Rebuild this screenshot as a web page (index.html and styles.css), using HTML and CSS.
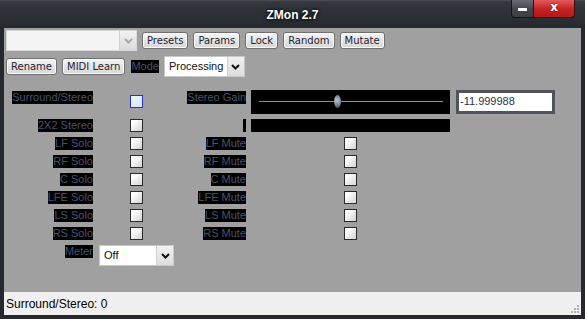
FILE: index.html
```html
<!DOCTYPE html>
<html lang="en">
<head>
  <meta charset="UTF-8">
  <title>ZMon 2.7</title>
  <link rel="stylesheet" href="styles.css">
</head>
<body>

<div class="window">
  <!-- Title bar -->
  <div class="titlebar">
    <div></div>
    <div class="title">ZMon 2.7</div>
    <div class="controls">
      <div class="btn-min"><span></span></div>
      <div class="btn-close">x</div>
    </div>
  </div>

  <div class="content">
    <!-- Preset toolbar -->
    <div class="toolbar">
      <div class="combo combo-presets">
        <span class="combo-text"></span>
        <span class="combo-arrow disabled"><svg width="9" height="6" viewBox="0 0 9 6"><path d="M1 1 L4.5 4.5 L8 1" fill="none" stroke="#a8a8a8" stroke-width="2"/></svg></span>
      </div>
      <button class="btn">Presets</button>
      <button class="btn">Params</button>
      <button class="btn">Lock</button>
      <button class="btn">Random</button>
      <button class="btn">Mutate</button>
    </div>

    <div class="toolbar">
      <button class="btn">Rename</button>
      <button class="btn">MIDI Learn</button>
      <span class="label mode-label">Mode</span>
      <div class="combo combo-mode">
        <span class="combo-text">Processing</span>
        <span class="combo-arrow"><svg width="9" height="6" viewBox="0 0 9 6"><path d="M1 1 L4.5 4.5 L8 1" fill="none" stroke="#111" stroke-width="2"/></svg></span>
      </div>
    </div>

    <!-- Parameters -->
    <div class="params">
      <span class="label row-top">Surround/Stereo</span>
      <span class="check focused col-cb1 row-top-cb"></span>
      <span class="label col-lb2 row-top">Stereo Gain</span>
      <div class="slider">
        <div class="groove"><span class="thumb"></span></div>
      </div>
      <div class="value-box">-11.999988</div>

      <span class="label">2X2 Stereo</span>
      <span class="check col-cb1"></span>
      <span class="label col-lb2 empty"></span>
      <div class="meter-bar"></div>

      <span class="label">LF Solo</span>
      <span class="check col-cb1"></span>
      <span class="label col-lb2">LF Mute</span>
      <span class="check col-cb2"></span>

      <span class="label">RF Solo</span>
      <span class="check col-cb1"></span>
      <span class="label col-lb2">RF Mute</span>
      <span class="check col-cb2"></span>

      <span class="label">C Solo</span>
      <span class="check col-cb1"></span>
      <span class="label col-lb2">C Mute</span>
      <span class="check col-cb2"></span>

      <span class="label">LFE Solo</span>
      <span class="check col-cb1"></span>
      <span class="label col-lb2">LFE Mute</span>
      <span class="check col-cb2"></span>

      <span class="label">LS Solo</span>
      <span class="check col-cb1"></span>
      <span class="label col-lb2">LS Mute</span>
      <span class="check col-cb2"></span>

      <span class="label">RS Solo</span>
      <span class="check col-cb1"></span>
      <span class="label col-lb2">RS Mute</span>
      <span class="check col-cb2"></span>

      <span class="label">Meter</span>
      <div class="combo combo-meter">
        <span class="combo-text">Off</span>
        <span class="combo-arrow"><svg width="9" height="6" viewBox="0 0 9 6"><path d="M1 1 L4.5 4.5 L8 1" fill="none" stroke="#111" stroke-width="2"/></svg></span>
      </div>
    </div>
  </div>

  <!-- Status bar -->
  <div class="statusbar">
    <span>Surround/Stereo: 0</span>
    <svg class="grip" width="9" height="9" viewBox="0 0 9 9">
      <rect x="7" y="1" width="2" height="2" fill="#b0b0b0"/>
      <rect x="4" y="4" width="2" height="2" fill="#b0b0b0"/>
      <rect x="7" y="4" width="2" height="2" fill="#b0b0b0"/>
      <rect x="1" y="7" width="2" height="2" fill="#b0b0b0"/>
      <rect x="4" y="7" width="2" height="2" fill="#b0b0b0"/>
      <rect x="7" y="7" width="2" height="2" fill="#b0b0b0"/>
    </svg>
  </div>
</div>

</body>
</html>
```

FILE: styles.css
```css
body {
  margin: 0;
  font-family: 'Liberation Sans', Arial, sans-serif;
  background-color: #ffffff;
}

.window {
  width: 585px;
  height: 319px;
  display: flex;
  flex-direction: column;
  background-color: #25282d;
  box-sizing: border-box;
  padding-bottom: 4px;
}

/* Title bar */
.titlebar {
  height: 28px;
  flex-shrink: 0;
  display: grid;
  grid-template-columns: 1fr auto 1fr;
  background: linear-gradient(#4c5057 0, #34373c 2px, #2b2e33 60%, #26292e 100%);
}

.title {
  align-self: center;
  color: #ffffff;
  font-weight: bold;
  font-size: 12px;
  text-shadow: 0 0 4px rgba(0, 0, 0, 0.9), 0 0 2px rgba(0, 0, 0, 0.9);
  padding-top: 1px;
}

.controls {
  justify-self: end;
  display: flex;
  align-items: flex-start;
  margin-right: 10px;
}

.btn-min {
  width: 23px;
  height: 18px;
  box-sizing: border-box;
  border: 1px solid #15171a;
  border-top: none;
  border-radius: 0 0 0 4px;
  background: linear-gradient(#6a6e74, #45484e 50%, #3a3d42);
  display: flex;
  justify-content: center;
  align-items: center;
}

.btn-min span {
  width: 9px;
  height: 3px;
  margin-top: 2px;
  background-color: #ffffff;
}

.btn-close {
  width: 41px;
  height: 18px;
  box-sizing: border-box;
  border: 1px solid #3a0c0c;
  border-top: none;
  border-left: none;
  border-radius: 0 0 4px 0;
  background: linear-gradient(#e45a5a, #c92424 50%, #b01a1a);
  color: #ffffff;
  font-family: 'DejaVu Sans', sans-serif;
  font-weight: bold;
  font-size: 12px;
  line-height: 15px;
  text-align: center;
  text-shadow: 0 0 2px rgba(80, 0, 0, 0.8);
}

/* Main area */
.content {
  flex: 1;
  margin: 0 4px;
  padding: 2px;
  background-color: #a0a0a0;
  display: flex;
  flex-direction: column;
  gap: 5px;
}

.toolbar {
  display: flex;
  align-items: center;
  gap: 5px;
  height: 21px;
}

.btn {
  height: 17px;
  padding: 0 4px;
  border: 1px solid #707070;
  border-radius: 3px;
  background: linear-gradient(#f7f7f7, #e4e4e4 50%, #d8d8d8);
  box-shadow: inset 0 0 0 1px #fbfbfb;
  font-family: 'DejaVu Sans', sans-serif;
  font-size: 10px;
  line-height: 15px;
  color: #1e2230;
}

.label {
  background-color: #000000;
  color: #46526e;
  font-size: 11px;
  line-height: 13px;
  height: 13px;
  white-space: nowrap;
  justify-self: end;
  align-self: start;
}

.label.empty {
  width: 3px;
}

.toolbar .mode-label {
  align-self: center;
  margin-left: 1px;
}

.row-top {
  margin-top: 1px;
}

/* Combo boxes */
.combo {
  display: flex;
  height: 21px;
  box-sizing: border-box;
  border: 1px solid #c8c8c8;
  background-color: #ffffff;
}

.combo-text {
  flex: 1;
  padding-left: 4px;
  font-size: 11px;
  line-height: 19px;
  color: #111111;
}

.combo-arrow {
  width: 16px;
  border-left: 1px solid #d0d0d0;
  background: linear-gradient(#f2f2f2, #dcdcdc);
  display: flex;
  justify-content: center;
  align-items: center;
}

.combo-presets {
  width: 131px;
  border-color: #d8d8d8;
}

.combo-presets .combo-text {
  background-color: #f4f4f4;
}

.combo-mode {
  width: 81px;
}

.combo-meter {
  grid-column: 2 / span 3;
  justify-self: start;
  margin-left: 6px;
  width: 75px;
}

/* Parameter grid */
.params {
  margin-top: 8px;
  display: grid;
  grid-template-columns: 87px 37px 13px 103px 5px 93px 13px 93px 6px 99px;
  grid-template-rows: 24px repeat(7, 13px) 21px;
  row-gap: 5px;
}

.params > .label:not(.col-lb2) {
  grid-column: 1;
}

.col-cb1 {
  grid-column: 3;
}

.col-lb2 {
  grid-column: 4;
}

.col-cb2 {
  grid-column: 7;
}

.check {
  width: 13px;
  height: 13px;
  box-sizing: border-box;
  border: 1px solid #2a2a2a;
  background: linear-gradient(135deg, #ffffff 20%, #d4d4d4);
  align-self: start;
}

.check.focused {
  border-color: #1c36c8;
  background: linear-gradient(135deg, #f4f7ff, #d6e1fa);
}

.row-top-cb {
  margin-top: 5px;
}

.slider {
  grid-column: 6 / span 3;
  background-color: #000000;
  display: flex;
  align-items: center;
  padding: 0 7px 0 8px;
}

.groove {
  flex: 1;
  height: 1px;
  margin-top: -1px;
  background-color: #8c8c8c;
  position: relative;
}

.thumb {
  position: absolute;
  left: calc(43% - 4px);
  top: -6px;
  width: 7px;
  height: 13px;
  border-radius: 50%;
  background: radial-gradient(circle at 40% 40%, #b8c4d0, #6f7d8c 60%, #3e4752);
}

.value-box {
  grid-column: 10;
  box-sizing: border-box;
  border: 3px solid #4f545b;
  background-color: #ffffff;
  color: #283350;
  font-size: 11px;
  line-height: 17px;
  padding-left: 1px;
}

.meter-bar {
  grid-column: 6 / span 3;
  background-color: #000000;
}

/* Status bar */
.statusbar {
  height: 23px;
  flex-shrink: 0;
  margin: 0 4px;
  padding: 0 2px 0 2px;
  background-color: #f0f0f0;
  display: flex;
  justify-content: space-between;
  align-items: center;
  font-size: 12px;
  color: #000000;
}

.grip {
  align-self: flex-end;
  margin-bottom: 2px;
}
```
